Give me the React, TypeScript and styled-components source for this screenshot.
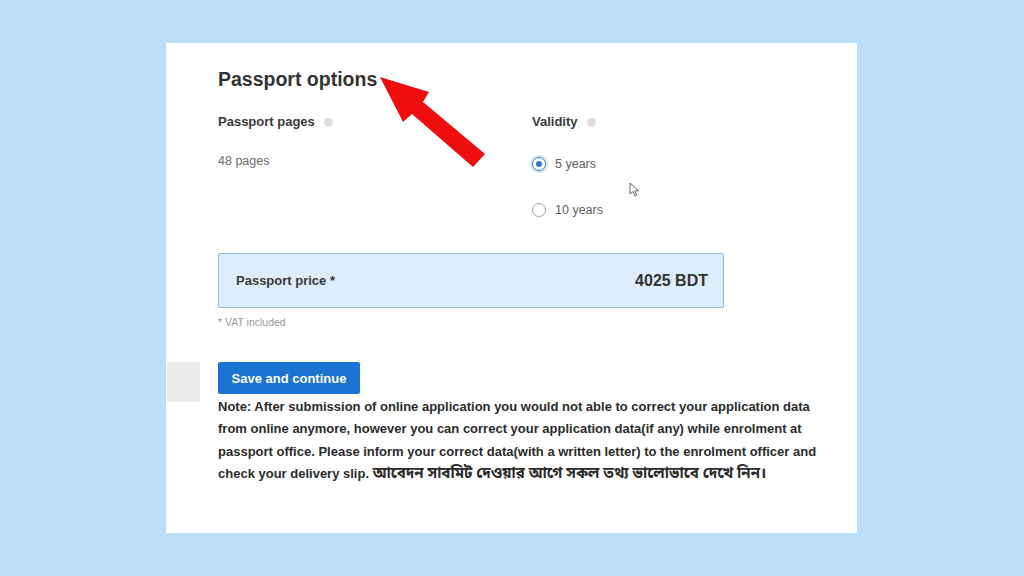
import React from "react";
import styled, { createGlobalStyle } from "styled-components";

const Global = createGlobalStyle`
  html, body { margin: 0; padding: 0; }
  body {
    background: #bcdef8;
    font-family: "Liberation Sans", Arial, "Noto Sans", sans-serif;
    width: 1024px;
    height: 576px;
    overflow: hidden;
  }
`;

const Stage = styled.div`
  padding: 43px 0 0 166px;
`;

const Card = styled.div`
  position: relative;
  width: 691px;
  height: 490px;
  background: #ffffff;
  box-sizing: border-box;
  padding-top: 24px;
`;

const Section = styled.div`
  padding-left: 52px;
`;

const Heading = styled.h2`
  margin: 0;
  font-size: 19.5px;
  line-height: 24px;
  font-weight: 700;
  color: #333333;
`;

const Options = styled.div`
  display: grid;
  grid-template-columns: 314px 1fr;
  margin-top: 23px;
`;

const Column = styled.div`
  display: flex;
  flex-direction: column;
`;

const Label = styled.div`
  display: flex;
  align-items: center;
  gap: 9px;
  font-size: 13px;
  line-height: 16px;
  font-weight: 700;
  color: #3a3a3a;
`;

const Help = styled.span`
  width: 9px;
  height: 9px;
  border-radius: 50%;
  background: #dedede;
`;

const Value = styled.div`
  margin-top: 23px;
  font-size: 12.5px;
  line-height: 16px;
  color: #6a6a6a;
`;

const RadioRow = styled.label<{ $first?: boolean }>`
  display: flex;
  align-items: center;
  gap: 9px;
  height: 20px;
  margin-top: ${(p) => (p.$first ? "24px" : "26px")};
  font-size: 12.5px;
  color: #5e5e5e;
`;

const RadioDot = styled.span<{ $checked?: boolean }>`
  position: relative;
  width: 14px;
  height: 14px;
  box-sizing: border-box;
  border-radius: 50%;
  border: 1.5px solid ${(p) => (p.$checked ? "#3f86c8" : "#a3a3a3")};
  box-shadow: ${(p) => (p.$checked ? "0 0 0 2px #d3e6f6" : "none")};
  background: #fff;
  display: flex;
  align-items: center;
  justify-content: center;
  &::after {
    content: "";
    display: ${(p) => (p.$checked ? "block" : "none")};
    width: 6px;
    height: 6px;
    border-radius: 50%;
    background: #2f78c4;
  }
`;

const PriceBox = styled.div`
  margin-top: 33px;
  width: 506px;
  height: 55px;
  box-sizing: border-box;
  display: flex;
  align-items: center;
  justify-content: space-between;
  padding: 0 15px 0 17px;
  background: #dcedfb;
  border: 1.5px solid #8dbbe0;
  border-radius: 2px;
`;

const PriceLabel = styled.span`
  font-size: 13px;
  font-weight: 700;
  color: #3a3a3a;
`;

const PriceValue = styled.span`
  font-size: 16px;
  font-weight: 700;
  color: #333;
`;

const Vat = styled.div`
  margin-top: 7px;
  font-size: 10.5px;
  line-height: 14px;
  color: #9a9a9a;
`;

const ActionRow = styled.div`
  display: flex;
  align-items: flex-start;
  gap: 18px;
  margin-top: 33px;
  padding-left: 1px;
`;

const GrayBlock = styled.div`
  width: 33px;
  height: 40px;
  background: #ececec;
  flex: none;
`;

const ActionColumn = styled.div`
  display: flex;
  flex-direction: column;
  align-items: flex-start;
`;

const Button = styled.button`
  width: 142px;
  height: 32px;
  border: none;
  border-radius: 2px;
  background: #1c74d2;
  color: #ffffff;
  font-family: inherit;
  font-size: 13px;
  font-weight: 700;
  padding: 0;
`;

const Note = styled.p`
  margin: 2px 0 0 0;
  width: 630px;
  font-size: 13px;
  line-height: 22.4px;
  font-weight: 700;
  color: #2b2b2b;
  white-space: nowrap;
`;

const Bn = styled.span`
  font-family: "Noto Sans Bengali", "Noto Serif Bengali", "Lohit Bengali", "Liberation Sans", sans-serif;
  font-size: 15px;
  font-weight: 700;
  line-height: 0;
`;

const ArrowSvg = styled.svg`
  position: absolute;
  left: 205px;
  top: 28px;
`;

const CursorSvg = styled.svg`
  position: absolute;
  left: 463px;
  top: 139px;
`;

export default function App() {
  return (
    <>
      <Global />
      <Stage>
        <Card>
          <Section>
            <Heading>Passport options</Heading>
            <Options>
              <Column>
                <Label>
                  Passport pages <Help />
                </Label>
                <Value>48 pages</Value>
              </Column>
              <Column>
                <Label>
                  Validity <Help />
                </Label>
                <RadioRow $first>
                  <RadioDot $checked />5 years
                </RadioRow>
                <RadioRow>
                  <RadioDot />10 years
                </RadioRow>
              </Column>
            </Options>
            <PriceBox>
              <PriceLabel>Passport price *</PriceLabel>
              <PriceValue>4025 BDT</PriceValue>
            </PriceBox>
            <Vat>* VAT included</Vat>
          </Section>
          <ActionRow>
            <GrayBlock />
            <ActionColumn>
              <Button>Save and continue</Button>
              <Note>
                Note: After submission of online application you would not able to correct your application data
                <br />
                from online anymore, however you can correct your application data(if any) while enrolment at
                <br />
                passport office. Please inform your correct data(with a written letter) to the enrolment officer and
                <br />
                check your delivery slip. <Bn>আবেদন সাবমিট দেওয়ার আগে সকল তথ্য ভালোভাবে দেখে নিন।</Bn>
              </Note>
            </ActionColumn>
          </ActionRow>
          <ArrowSvg width="120" height="110" viewBox="0 0 120 110">
            <polygon
              points="9,6 32,51 41,43 102,96 114,83 52,31 58,21"
              fill="#f00d0d"
            />
          </ArrowSvg>
          <CursorSvg width="12" height="16" viewBox="0 0 12 16">
            <path d="M1 1 L1 12 L4 9.5 L6 14 L7.8 13.2 L5.8 8.8 L9.5 8.8 Z" fill="#fff" stroke="#666" strokeWidth="1" />
          </CursorSvg>
        </Card>
      </Stage>
    </>
  );
}
